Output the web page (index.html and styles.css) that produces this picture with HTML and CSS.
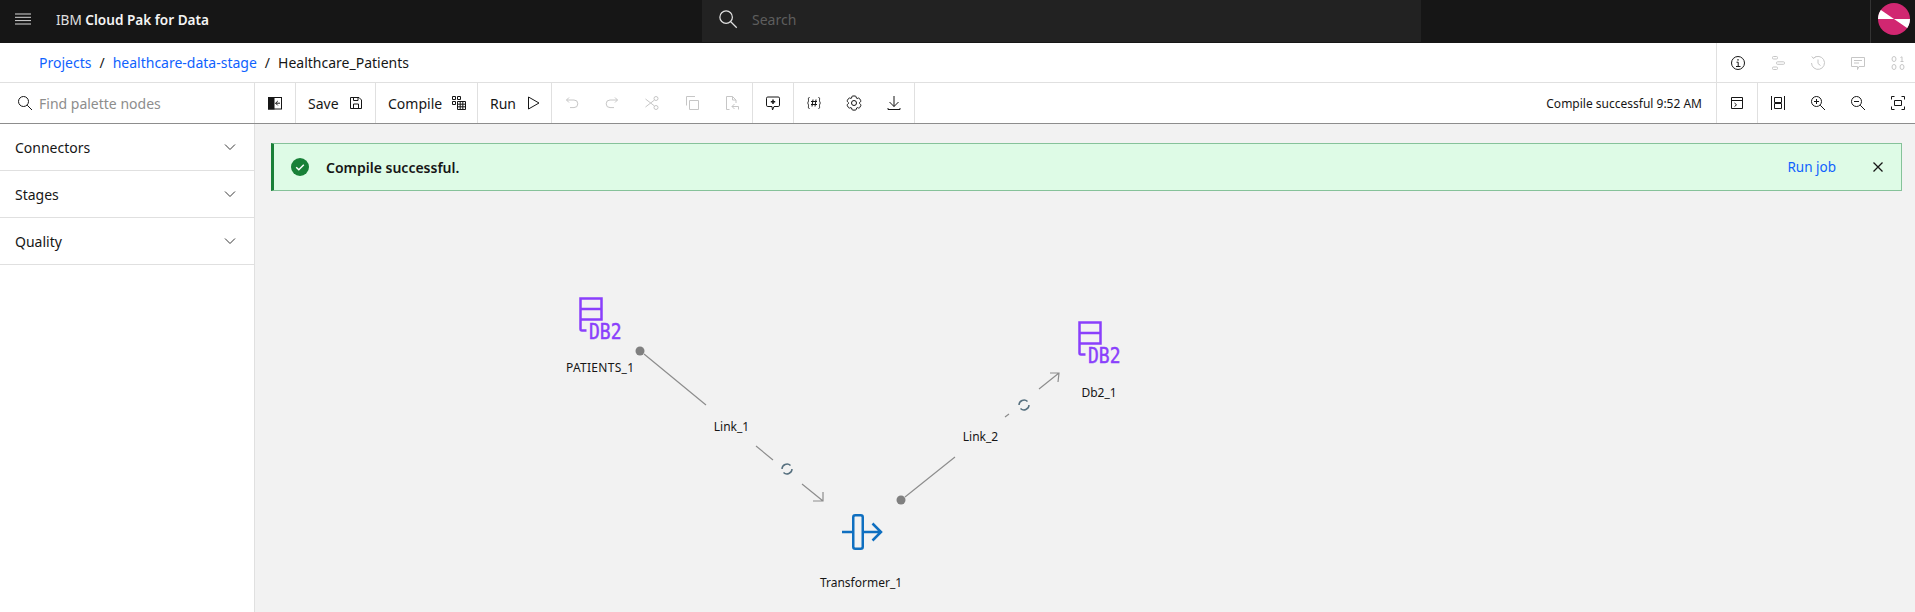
FILE: index.html
```html
<!DOCTYPE html>
<html lang="en">
<head>
  <meta charset="UTF-8" />
  <title>Healthcare_Patients - IBM Cloud Pak for Data</title>
  <link rel="stylesheet" href="styles.css">
</head>
<body>
  <header class="topbar">
    <div class="topbar-left">
      <svg class="menu-icon" viewBox="0 0 18 12" width="18" height="12"><path d="M1 1h16M1 4.300h16M1 7.600h16M1 11h16"/></svg>
      <span class="brand">IBM <b>Cloud Pak for Data</b></span>
    </div>
    <div class="global-search">
      <svg class="icon" viewBox="0 0 16 16" width="20" height="20"><circle cx="6.500" cy="6.500" r="5"/><path d="M10.200 10.200l4.800 4.800"/></svg>
      <span>Search</span>
    </div>
    <div class="topbar-right">
      <svg viewBox="0 0 32 32" width="32" height="32">
        <defs><clipPath id="avatarClip"><circle cx="16" cy="16" r="16"/></clipPath></defs>
        <g clip-path="url(#avatarClip)">
          <rect width="32" height="32" fill="#d12771"/>
          <path d="M-4 30L8 36h-12zM18 -2l16 10v-10zM6 32L0 22v10z" fill="#a11950"/>
          <path d="M0 5L16 16H0zM16 16H32V27z" fill="#fff"/>
        </g>
      </svg>
    </div>
  </header>

  <nav class="crumbbar">
    <div class="crumbs">
      <a href="#">Projects</a><span class="sep">/</span><a href="#">healthcare-data-stage</a><span class="sep">/</span><span>Healthcare_Patients</span>
    </div>
    <div class="crumb-tools">
      <span class="tool-btn"><svg class="icon" viewBox="0 0 16 16" width="16" height="16"><circle cx="8" cy="8" r="6.500"/><path d="M6.500 7.200H8.200V11.500M6 11.500h4.500" /><path d="M8 4.200v1.300" stroke-width="1.500"/></svg></span>
      <span class="tool-btn off"><svg class="icon" viewBox="0 0 16 16" width="16" height="16"><rect x="2.500" y="1.500" width="5" height="2.500" rx="1"/><rect x="6.500" y="6.800" width="8" height="2.500" rx="1"/><rect x="2.500" y="12" width="5" height="2.500" rx="1"/></svg></span>
      <span class="tool-btn off"><svg class="icon" viewBox="0 0 16 16" width="16" height="16"><path d="M3.500 3.200A6.500 6.500 0 1 1 1.500 8"/><path d="M1.800 1.500L3.300 3.400 5.500 1.800M8 4.500V8.500l2.500 2"/></svg></span>
      <span class="tool-btn off"><svg class="icon" viewBox="0 0 16 16" width="16" height="16"><path d="M1.500 2.500h13v9H9L7.500 14.500V11.500h-6z"/><path d="M4 5.500h8M4 8h5"/></svg></span>
      <span class="tool-btn off"><svg class="icon" viewBox="0 0 16 16" width="16" height="16"><ellipse cx="4" cy="4" rx="2" ry="2.500"/><path d="M10.500 2.500L12 1.800V6.500M10.500 6.500h3"/><ellipse cx="4" cy="12" rx="2" ry="2.500"/><ellipse cx="12" cy="12" rx="2" ry="2.500"/></svg></span>
    </div>
  </nav>

  <div class="toolbar">
    <div class="palette-search">
      <svg class="icon" viewBox="0 0 16 16" width="16" height="16"><circle cx="6.500" cy="6.500" r="5"/><path d="M10.200 10.200l4.800 4.800"/></svg>
      <span>Find palette nodes</span>
    </div>
    <div class="tool-group">
      <span class="tool-btn"><svg viewBox="0 0 16 16" width="16" height="16"><rect x="1.500" y="2.500" width="13" height="11.500" fill="none" stroke="#161616"/><rect x="1" y="2" width="6.500" height="12.500" fill="#161616"/><path d="M13 8.200H8.500M10.800 6L8.600 8.200l2.200 2.200" fill="none" stroke="#161616"/></svg></span>
    </div>
    <div class="tool-group">
      <span class="tool-btn wide save">Save <svg class="icon" viewBox="0 0 16 16" width="16" height="16"><path d="M2.500 2.500h8.500l2.500 2.500v8.500h-11z"/><path d="M5.500 13.500V9h5v4.500M5.500 2.500v3h4.500v-3"/></svg></span>
    </div>
    <div class="tool-group">
      <span class="tool-btn wide compile">Compile <svg class="icon" viewBox="0 0 16 16" width="16" height="16"><path d="M1.500 1.500h3v3h-3zM6.500 1.500h3v3h-3zM1.500 6.500h3v3h-3zM6.500 6.500h8v8h-8zM9.200 6.500v8M11.800 6.500v8M6.500 9.200h8M6.500 11.800h8"/></svg></span>
    </div>
    <div class="tool-group">
      <span class="tool-btn wide run">Run <svg class="icon" viewBox="0 0 16 16" width="16" height="16"><path d="M3.500 2v12l10.500-6z"/></svg></span>
    </div>
    <div class="tool-group">
      <span class="tool-btn off"><svg class="icon" viewBox="0 0 16 16" width="16" height="16"><path d="M5 2.500L2.500 5 5 7.500M2.500 5H10a3.800 3.800 0 0 1 0 7.600H6"/></svg></span>
      <span class="tool-btn off"><svg class="icon" viewBox="0 0 16 16" width="16" height="16"><path d="M11 2.500L13.500 5 11 7.500M13.500 5H6a3.800 3.800 0 0 0 0 7.600h4"/></svg></span>
      <span class="tool-btn off"><svg class="icon" viewBox="0 0 16 16" width="16" height="16"><circle cx="12" cy="3.500" r="2"/><circle cx="12" cy="12.500" r="2"/><path d="M10.500 11L1.500 4M10.500 5L1.500 12"/></svg></span>
      <span class="tool-btn off"><svg class="icon" viewBox="0 0 16 16" width="16" height="16"><path d="M5.500 5.500h9v9h-9zM2.500 10.500V1.500h8.500"/></svg></span>
      <span class="tool-btn off"><svg class="icon" viewBox="0 0 16 16" width="16" height="16"><path d="M5.500 14.500h-3v-13h6l3.500 3.500v3M8.500 1.500V5h3.500M14.500 11.500H8M10.500 9L8 11.500l2.500 2.500V14M14.500 11.500v3"/></svg></span>
    </div>
    <div class="tool-group">
      <span class="tool-btn"><svg class="icon" viewBox="0 0 16 16" width="16" height="16"><path d="M2.800 2h10.400q1.300 0 1.300 1.300v6.900q0 1.300-1.300 1.300H9L7.500 15 7 11.500H2.800q-1.300 0-1.300-1.300V3.300q0-1.300 1.300-1.300z"/><path d="M8 4.500v4.500M5.800 6.800h4.400" stroke-width="1.500"/></svg></span>
    </div>
    <div class="tool-group">
      <span class="tool-btn"><svg class="icon" viewBox="0 0 16 16" width="16" height="16"><path d="M3.500 2.500c-1.500 0-1 1.500-1 3 0 1.500-1 2.500-1 2.500s1 1 1 2.500c0 1.500-.5 3 1 3M12.500 2.500c1.500 0 1 1.500 1 3 0 1.500 1 2.500 1 2.500s-1 1-1 2.500c0 1.500.5 3-1 3"/><path d="M7 4.500L6 11.500M10 4.500L9 11.500M5 6.500h6M5 9.500h6"/></svg></span>
      <span class="tool-btn"><svg class="icon" viewBox="0 0 16 16" width="16" height="16"><path d="M13.500 8.400v-.8l1-.8c.4-.3.4-.9.200-1.300l-1.200-2c-.2-.3-.5-.5-.9-.5l-.3.100-1.200.4-.7-.4-.3-1.300c-.1-.5-.5-.8-1-.8H6.800c-.5 0-.9.300-1 .8l-.2 1.300-.7.300-1.200-.4H3.400c-.4 0-.7.200-.9.500l-1.200 2c-.2.400-.1.900.3 1.300l.9.900v.8l-1 .8c-.4.300-.5.900-.2 1.300l1.200 2c.2.300.5.500.9.500l.3-.1 1.200-.4.700.4.300 1.300c.1.500.5.800 1 .8h2.400c.5 0 .9-.3 1-.8l.3-1.300.7-.4 1.200.4.300.1c.4 0 .7-.2.900-.5l1.100-2c.2-.4.200-.9-.2-1.200z"/><circle cx="8" cy="8" r="2.500"/></svg></span>
      <span class="tool-btn"><svg class="icon" viewBox="0 0 16 16" width="16" height="16"><path d="M8 1v10.500M3.500 7L8 11.500 12.500 7M2 13v1.500h12V13"/></svg></span>
    </div>
    <div class="toolbar-status">Compile successful 9:52 AM</div>
    <div class="tool-group start">
      <span class="tool-btn"><svg class="icon" viewBox="0 0 16 16" width="16" height="16"><path d="M2.500 2.500h11v11h-11zM2.500 5.500h11M5.500 8l2 1.800-2 1.800"/></svg></span>
    </div>
    <div class="tool-group last">
      <span class="tool-btn"><svg class="icon" viewBox="0 0 16 16" width="16" height="16"><path d="M1.500 1v14M14.500 1v14M4.500 2.500h7v5h-7zM4.500 8.500h7v5h-7z"/></svg></span>
      <span class="tool-btn"><svg class="icon" viewBox="0 0 16 16" width="16" height="16"><circle cx="6.500" cy="6.500" r="5"/><path d="M10.200 10.200l4.800 4.800M6.500 4v5M4 6.500h5"/></svg></span>
      <span class="tool-btn"><svg class="icon" viewBox="0 0 16 16" width="16" height="16"><circle cx="6.500" cy="6.500" r="5"/><path d="M10.200 10.200l4.800 4.800M4 6.500h5"/></svg></span>
      <span class="tool-btn"><svg class="icon" viewBox="0 0 16 16" width="16" height="16"><path d="M1.500 4.500v-3h3M11.500 1.500h3v3M14.500 11.500v3h-3M4.500 14.500h-3v-3M4.500 5.500h7v5h-7z"/></svg></span>
    </div>
  </div>

  <main class="workspace">
    <aside class="palette">
      <div class="palette-row">Connectors <svg class="icon" viewBox="0 0 16 16" width="16" height="16"><path d="M3 5.500l5 5 5-5"/></svg></div>
      <div class="palette-row">Stages <svg class="icon" viewBox="0 0 16 16" width="16" height="16"><path d="M3 5.500l5 5 5-5"/></svg></div>
      <div class="palette-row">Quality <svg class="icon" viewBox="0 0 16 16" width="16" height="16"><path d="M3 5.500l5 5 5-5"/></svg></div>
    </aside>

    <section class="canvas">
      <div class="notice">
        <svg viewBox="0 0 18 18" width="18" height="18"><circle cx="9" cy="9" r="9" fill="#198038"/><path d="M5.200 9.200l2.600 2.500 5-5" fill="none" stroke="#fff" stroke-width="1.500"/></svg>
        <strong>Compile successful.</strong>
        <a href="#">Run job</a>
        <svg class="icon notice-close" viewBox="0 0 16 16" width="16" height="16"><path d="M3.500 3.500l9 9M12.500 3.500l-9 9"/></svg>
      </div>

      <!-- viewBox uses page coordinates, the canvas starts at 255,124 -->
      <svg class="flow" viewBox="255 124 1660 488" width="1660" height="488">
        <g class="link">
          <circle class="port" cx="640" cy="351" r="4.500"/>
          <path d="M644 354L706 405M756 446L773 460M802 484L823 501M823 492L823 501 813 501"/>
          <circle class="port" cx="901" cy="500" r="4.500"/>
          <path d="M905 497L955 457M1005 417L1009 414M1039 389L1059 373M1050 373L1059 373 1058 382"/>
        </g>
        <g class="swap">
          <path d="M782 469A5 5 0 0 1 790.500 465.500M792 469A5 5 0 0 1 783.500 472.500"/>
          <path d="M1019 405A5 5 0 0 1 1027.500 401.500M1029 405A5 5 0 0 1 1020.500 408.500"/>
        </g>

        <g class="db2">
          <path d="M580.500 329V298.500h21v21h-21M580.500 309h21M580.500 329q0 1.500 1.500 1.500h4.500"/>
          <text x="589" y="339" textLength="32.500" lengthAdjust="spacingAndGlyphs">DB2</text>
        </g>
        <g class="db2">
          <path d="M1079.500 353V322.500h21v21h-21M1079.500 333h21M1079.500 353q0 1.500 1.500 1.500h4.500"/>
          <text x="1088" y="363" textLength="32.500" lengthAdjust="spacingAndGlyphs">DB2</text>
        </g>
        <g class="xform">
          <rect x="853.250" y="515.250" width="9.500" height="33.500" rx="2"/>
          <path d="M842 532h11M863 532h18M872.500 523.500L881 532 872.500 540.500"/>
        </g>

        <text class="node-label" x="566" y="371.500" textLength="68">PATIENTS_1</text>
        <text class="node-label" x="731.500" y="431" text-anchor="middle">Link_1</text>
        <text class="node-label" x="980.500" y="440.500" text-anchor="middle">Link_2</text>
        <text class="node-label" x="1099" y="396.500" text-anchor="middle">Db2_1</text>
        <text class="node-label" x="861" y="586.500" text-anchor="middle">Transformer_1</text>
      </svg>
    </section>
  </main>
</body>
</html>
```

FILE: styles.css
```css
* {
  box-sizing: border-box;
}

html,
body {
  height: 100%;
}

body {
  margin: 0;
  display: flex;
  flex-direction: column;
  overflow: hidden;
  font-family: "Noto Sans", "Liberation Sans", sans-serif;
  font-size: 14px;
  color: #161616;
  background: #fff;
}

a {
  color: #0f62fe;
  text-decoration: none;
}

.icon {
  fill: none;
  stroke: currentColor;
  stroke-width: 1;
  flex: none;
}

/* top bar */
.topbar {
  height: 43px;
  flex: none;
  display: flex;
  align-items: center;
  background: #161616;
  color: #f4f4f4;
}

.topbar-left {
  width: 702px;
  height: 100%;
  display: flex;
  align-items: center;
  padding: 0 0 5px 14px;
}

.menu-icon {
  fill: none;
  stroke: #d8d8d8;
  stroke-width: 1;
}

.brand {
  margin-left: 24px;
  color: #e0e0e0;
  font-size: 13.600px;
}

.brand b {
  font-weight: 600;
  color: #f4f4f4;
}

.global-search {
  width: 719px;
  height: 42px;
  align-self: flex-start;
  display: flex;
  align-items: center;
  gap: 14px;
  padding: 0 0 4px 16px;
  background: #222;
  color: #e0e0e0;
}

.global-search span {
  color: #5e5e5e;
}

.topbar-right {
  margin-left: auto;
  width: 45px;
  height: 100%;
  display: flex;
  align-items: center;
  padding: 0 0 5px 7px;
  border-left: 1px solid #333;
}

/* breadcrumb row */
.crumbbar {
  height: 40px;
  flex: none;
  display: flex;
  justify-content: space-between;
  border-bottom: 1px solid #e0e0e0;
}

.crumbs {
  display: flex;
  align-items: center;
  padding-left: 39px;
}

.sep {
  margin: 0 8px;
}

.crumb-tools {
  display: flex;
  margin-right: -3px;
  padding-left: 1px;
  border-left: 1px solid #e0e0e0;
}

.tool-btn {
  width: 40px;
  height: 100%;
  display: flex;
  align-items: center;
  justify-content: center;
}

.off {
  color: #c6c6c6;
}

/* toolbar */
.toolbar {
  height: 41px;
  flex: none;
  display: flex;
  border-bottom: 1px solid #8d8d8d;
}

.palette-search {
  width: 255px;
  flex: none;
  display: flex;
  align-items: center;
  gap: 6px;
  padding-left: 17px;
  border-right: 1px solid #e0e0e0;
  color: #8d8d8d;
}

.palette-search .icon {
  color: #161616;
}

.tool-group {
  display: flex;
  border-right: 1px solid #e0e0e0;
}

.tool-btn.wide {
  justify-content: flex-start;
  gap: 9px;
  padding-left: 12px;
}

.save {
  width: 79px;
}

.compile {
  width: 101px;
}

.run {
  width: 73px;
}

.toolbar-status {
  margin-left: auto;
  align-self: center;
  padding-right: 14px;
  font-size: 12px;
}

.tool-group.start {
  border-left: 1px solid #e0e0e0;
}

.tool-group.last {
  border-right: 0;
  margin-right: -3px;
}

/* left palette */
.workspace {
  flex: 1;
  min-height: 0;
  display: flex;
}

.palette {
  width: 255px;
  flex: none;
  border-right: 1px solid #e0e0e0;
}

.palette-row {
  height: 47px;
  display: flex;
  align-items: center;
  justify-content: space-between;
  padding: 0 16px 0 15px;
  border-bottom: 1px solid #e0e0e0;
}

.palette-row .icon {
  color: #393939;
}

/* canvas */
.canvas {
  flex: 1;
  position: relative;
  background: #f2f2f2;
  padding: 19px 13px 0 16px;
}

.notice {
  height: 48px;
  display: flex;
  align-items: center;
  padding: 0 15px 0 17px;
  background: #defbe6;
  border: 1px solid #86c29a;
  border-left: 3px solid #198038;
}

.notice strong {
  margin-left: 17px;
  font-weight: 600;
}

.notice a {
  margin-left: auto;
  font-size: 13.500px;
}

.notice-close {
  margin-left: 34px;
  stroke-width: 1.300;
}

.flow {
  position: absolute;
  left: 0;
  top: 0;
}

.link path {
  fill: none;
  stroke: #8d8d8d;
  stroke-width: 1.200;
}

.port {
  fill: #808080;
}

.swap path {
  fill: none;
  stroke: #56707f;
  stroke-width: 1.500;
}

.db2 path {
  fill: none;
  stroke: #8a3ffc;
  stroke-width: 2.500;
}

.db2 text {
  font-family: "DejaVu Sans Mono", monospace;
  font-size: 22px;
  fill: #8a3ffc;
  stroke: #8a3ffc;
  stroke-width: 0.500;
}

.xform rect,
.xform path {
  fill: none;
  stroke: #0f6fc0;
  stroke-width: 2.500;
}

.node-label {
  font-size: 12px;
  fill: #161616;
}
```
